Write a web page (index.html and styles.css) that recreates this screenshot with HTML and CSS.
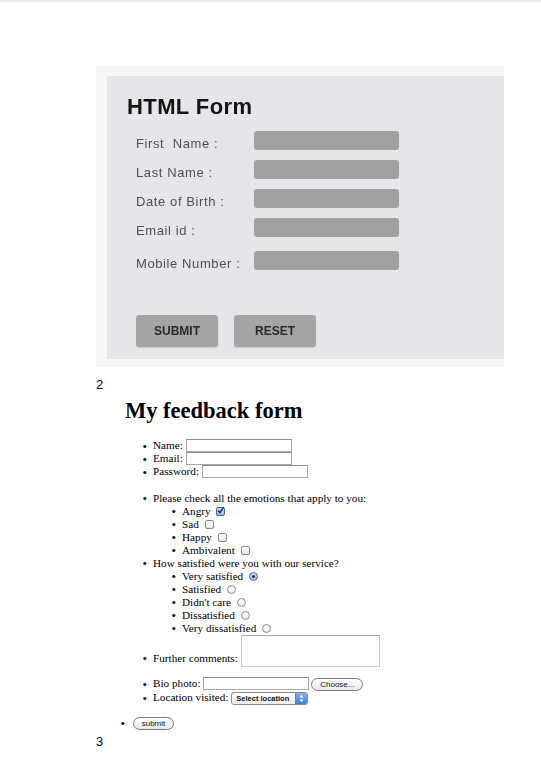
FILE: index.html
```html
<!DOCTYPE html>
<html>
<head>
<meta charset="utf-8">
<title>Forms</title>
<link rel="stylesheet" href="styles.css">
</head>
<body>
<div class="topbar"></div>
<main class="page">
  <section class="shot">
    <div class="card">
      <h2 class="card-title">HTML Form</h2>
      <div class="rows">
        <div class="row"><span class="lbl">First&nbsp; Name :</span><span class="field"></span></div>
        <div class="row"><span class="lbl">Last Name :</span><span class="field"></span></div>
        <div class="row"><span class="lbl">Date of Birth :</span><span class="field"></span></div>
        <div class="row"><span class="lbl">Email id :</span><span class="field"></span></div>
        <div class="row row-last"><span class="lbl">Mobile Number :</span><span class="field"></span></div>
      </div>
      <div class="btns"><span class="btn">SUBMIT</span><span class="btn">RESET</span></div>
    </div>
  </section>
  <div class="num">2</div>
  <section class="fb">
    <h1 class="fb-title">My feedback form</h1>
    <ul class="fields first">
      <li>Name: <span class="txt"></span></li>
      <li>Email: <span class="txt"></span></li>
      <li>Password: <span class="txt"></span></li>
    </ul>
    <ul class="fields">
      <li>Please check all the emotions that apply to you:
        <ul class="sub">
          <li>Angry <span class="cb cb-on"><svg viewBox="0 0 9 9" width="9" height="9"><path d="M2 4.6 L3.9 6.6 L7.6 1.2" fill="none" stroke="#1d2c5a" stroke-width="1.4"/></svg></span></li>
          <li>Sad <span class="cb"></span></li>
          <li>Happy <span class="cb"></span></li>
          <li>Ambivalent <span class="cb"></span></li>
        </ul>
      </li>
      <li>How satisfied were you with our service?
        <ul class="sub">
          <li>Very satisfied <span class="rd rd-on"></span></li>
          <li>Satisfied <span class="rd"></span></li>
          <li>Didn't care <span class="rd"></span></li>
          <li>Dissatisfied <span class="rd"></span></li>
          <li>Very dissatisfied <span class="rd"></span></li>
        </ul>
      </li>
      <li>Further comments: <span class="area"></span></li>
    </ul>
    <ul class="fields">
      <li>Bio photo: <span class="txt"></span><span class="pill choose">Choose...</span></li>
      <li>Location visited: <span class="sel"><span class="sel-text">Select location</span><span class="sel-arrow"><svg viewBox="0 0 7 9" width="7" height="9"><path d="M3.5 0.8 L5.6 3.4 H1.4 Z M3.5 8.2 L5.6 5.6 H1.4 Z" fill="#fff"/></svg></span></span></li>
    </ul>
    <ul class="main">
      <li><span class="pill submit">submit</span></li>
    </ul>
  </section>
  <div class="num num3">3</div>
</main>
</body>
</html>
```

FILE: styles.css
```css
html, body {
  margin: 0;
  padding: 0;
  background: #ffffff;
}

.topbar {
  height: 2px;
  background: #e9edf8;
}

.page {
  padding: 64px 37px 0 96px;
}

/* ---- top screenshot ---- */
.shot {
  width: 408px;
  background: #f6f6f6;
  padding: 10px 0 8px 11px;
  box-sizing: border-box;
}

.card {
  background: #e4e6e9;
  padding: 18px 0 12px 20px;
  filter: blur(0.6px);
}

.card-title {
  margin: 0;
  font-family: "Liberation Sans", Arial, sans-serif;
  font-weight: bold;
  font-size: 22px;
  line-height: 25px;
  letter-spacing: 0.4px;
  color: #141414;
}

.rows {
  margin-top: 12px;
  padding-left: 9px;
  display: flex;
  flex-direction: column;
  gap: 10px;
}

.row {
  display: flex;
  height: 19px;
}

.row-last {
  margin-top: 4px;
}

.lbl {
  width: 118px;
  height: 19px;
  line-height: 25px;
  font-family: "Liberation Sans", Arial, sans-serif;
  font-size: 13px;
  letter-spacing: 0.6px;
  color: #4f4f4f;
  white-space: nowrap;
}

.field {
  width: 145px;
  height: 19px;
  background: #a1a1a1;
  border-radius: 3px;
}

.btns {
  display: flex;
  gap: 16px;
  margin-top: 45px;
  padding-left: 9px;
}

.btn {
  width: 82px;
  height: 32px;
  background: #a4a4a4;
  border-radius: 3px;
  box-shadow: 0 1px 1px rgba(0,0,0,0.12);
  display: flex;
  align-items: center;
  justify-content: center;
  font-family: "Liberation Sans", Arial, sans-serif;
  font-weight: bold;
  font-size: 12px;
  color: #2a2a2a;
}

/* ---- page numbers ---- */
.num {
  font-family: "Liberation Sans", Arial, sans-serif;
  font-size: 13px;
  line-height: 16px;
  color: #000;
  margin-top: 10px;
}

.num3 {
  margin-top: 4px;
}

/* ---- feedback form ---- */
.fb {
  font-family: "Liberation Serif", "Times New Roman", serif;
  font-size: 11.2px;
  line-height: 13px;
  color: #000;
}

.fb-title {
  margin: 5px 0 0 29px;
  font-size: 22.5px;
  line-height: 26px;
  font-weight: bold;
}

.fb ul {
  margin: 0;
  list-style: none;
}

.fb li::before {
  content: "\2022";
  display: inline-block;
  width: 10.5px;
  margin-left: -10.5px;
  font-size: 13px;
  line-height: 9px;
  vertical-align: -1.5px;
}

.fields {
  padding-left: 57px;
}

.fb .fields.first {
  margin-top: 15px;
}

.fb .fields + .fields {
  margin-top: 13.5px;
}

.fb .fields + .fields + .fields {
  margin-top: 10.5px;
}

.sub {
  padding-left: 29px;
}

.fb .main {
  padding-left: 35px;
  margin-top: 11px;
}

.txt {
  display: inline-block;
  width: 106px;
  height: 13px;
  box-sizing: border-box;
  border: 1px solid #a9a9a9;
  border-top-color: #8e8e8e;
  background: #fff;
  vertical-align: -3px;
}

.cb {
  display: inline-block;
  width: 9px;
  height: 9px;
  box-sizing: border-box;
  border: 1px solid #8a8a8a;
  border-radius: 2px;
  background: linear-gradient(#ffffff, #e6e6e6);
  margin-left: 3px;
  vertical-align: -1px;
  position: relative;
}

.cb-on {
  border-color: #4a6aa8;
  background: linear-gradient(#cfe0f5, #8fb4e6);
}

.cb-on svg {
  position: absolute;
  left: -1px;
  top: -2px;
}

.rd {
  display: inline-block;
  width: 9px;
  height: 9px;
  box-sizing: border-box;
  border: 1px solid #8f8f8f;
  border-radius: 50%;
  background: radial-gradient(circle at 50% 30%, #ffffff, #e2e2e2);
  margin-left: 3px;
  vertical-align: -1px;
  position: relative;
}

.rd-on {
  border-color: #4a6aa8;
  background: radial-gradient(circle at 50% 30%, #d7e6f8, #8cb2e6);
}

.rd-on::after {
  content: "";
  position: absolute;
  left: 2px;
  top: 2px;
  width: 3px;
  height: 3px;
  border-radius: 50%;
  background: #1a2a55;
}

.area {
  display: inline-block;
  width: 139px;
  height: 32px;
  box-sizing: border-box;
  border: 1px solid #c8c8c8;
  border-top-color: #aaaaaa;
  background: #fff;
  vertical-align: -5px;
}

.pill {
  display: inline-block;
  box-sizing: border-box;
  height: 13px;
  border: 1px solid #7a7a7a;
  border-radius: 7px;
  background: linear-gradient(#ffffff, #e9e9e9);
  font-family: "Liberation Sans", Arial, sans-serif;
  font-size: 8px;
  line-height: 11px;
  text-align: center;
  color: #111;
  vertical-align: baseline;
}

.choose {
  width: 52px;
  margin-left: 2px;
}

.submit {
  width: 41px;
  margin-left: 2px;
}

.sel {
  display: inline-flex;
  box-sizing: border-box;
  width: 77px;
  height: 13px;
  border: 1px solid #8a8a8a;
  border-radius: 3px;
  background: linear-gradient(#ffffff, #ececec);
  vertical-align: baseline;
  overflow: hidden;
}

.sel-text {
  flex: 1;
  font-family: "Liberation Sans", Arial, sans-serif;
  font-size: 7.5px;
  font-weight: bold;
  line-height: 11px;
  padding-left: 4px;
  color: #111;
  white-space: nowrap;
}

.sel-arrow {
  width: 11px;
  display: flex;
  align-items: center;
  justify-content: center;
  background: linear-gradient(#7fb0ee, #3b7fe0);
  border-left: 1px solid #5a84c0;
}
```
